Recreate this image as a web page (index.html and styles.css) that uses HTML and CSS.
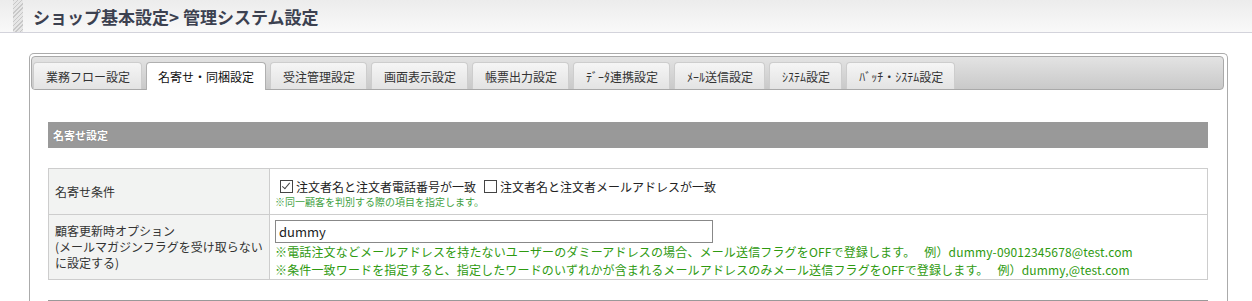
FILE: index.html
```html
<!DOCTYPE html>
<html lang="ja">
<head>
  <meta charset="UTF-8">
  <title>ショップ基本設定&gt;管理システム設定</title>
  <link rel="stylesheet" href="styles.css">
</head>
<body>

  <div class="page-title">
    <span class="hatch"></span>
    <h1>ショップ基本設定&gt; 管理システム設定</h1>
  </div>

  <div class="panel">
    <ul class="tabs">
      <li class="tab">業務フロー設定</li>
      <li class="tab active">名寄せ・同梱設定</li>
      <li class="tab">受注管理設定</li>
      <li class="tab">画面表示設定</li>
      <li class="tab">帳票出力設定</li>
      <li class="tab">ﾃﾞｰﾀ連携設定</li>
      <li class="tab">ﾒｰﾙ送信設定</li>
      <li class="tab">ｼｽﾃﾑ設定</li>
      <li class="tab">ﾊﾞｯﾁ・ｼｽﾃﾑ設定</li>
    </ul>

    <div class="content">
      <h2 class="section-head">名寄せ設定</h2>

      <table class="form-table">
        <tr class="row-match">
          <th>名寄せ条件</th>
          <td>
            <div class="checks">
              <label class="check"><span class="box checked"></span>注文者名と注文者電話番号が一致</label>
              <label class="check"><span class="box"></span>注文者名と注文者メールアドレスが一致</label>
            </div>
            <p class="note small">※同一顧客を判別する際の項目を指定します。</p>
          </td>
        </tr>
        <tr class="row-option">
          <th>顧客更新時オプション<br>(メールマガジンフラグを受け取らない<br>に設定する)</th>
          <td>
            <input type="text" class="text-input" value="dummy">
            <p class="note">※電話注文などメールアドレスを持たないユーザーのダミーアドレスの場合、メール送信フラグをOFFで登録します。　 例）dummy-09012345678@test.com</p>
            <p class="note">※条件一致ワードを指定すると、指定したワードのいずれかが含まれるメールアドレスのみメール送信フラグをOFFで登録します。　 例）dummy,@test.com</p>
          </td>
        </tr>
      </table>

      <div class="divider"></div>
    </div>
  </div>

</body>
</html>
```

FILE: styles.css
```css
body {
  margin: 0;
  padding: 0;
  background: #fff;
  font-family: "Noto Sans CJK JP", "Noto Sans", sans-serif;
  color: #333;
}
.page-title {
  height: 32px;
  display: flex;
  align-items: center;
  background: linear-gradient(#ececec, #f9f9f9);
  border-bottom: 1px solid #d3d3db;
}
.hatch {
  align-self: stretch;
  width: 10px;
  margin-left: 13px;
  background: repeating-linear-gradient(135deg, #c8c8c8 0 1px, #e6e6e6 1px 3px);
}
.page-title h1 {
  margin: 0 0 0 10px;
  font-size: 17px;
  font-weight: bold;
  color: #3c4150;
}
.panel {
  margin: 20px 24px 0 29px;
  border: 1px solid #ababab;
  border-bottom: none;
  border-radius: 5px 5px 0 0;
  height: 260px;
}
.tabs {
  list-style: none;
  margin: 2px 3px 0 1px;
  padding: 5px 0 0 1px;
  height: 27px;
  display: flex;
  gap: 4px;
  background: linear-gradient(#e3e3e3, #c9c9c9);
  border: 1px solid #a9a9a9;
  border-radius: 4px;
}
.tab {
  height: 26px;
  padding: 0 11px 0 12px;
  display: flex;
  align-items: center;
  font-size: 12px;
  color: #333;
  background: linear-gradient(#f5f5f5, #e3e3e3);
  border: 1px solid #cdcdcd;
  border-bottom: none;
  border-radius: 4px 4px 0 0;
}
.tab.active {
  height: 27px;
  margin-bottom: -1px;
  padding: 0 11px 0 11px;
  font-size: 12px;
  color: #111;
  background: #fff;
  border-color: #b0b0b0;
}
.content {
  padding: 32px 19px 0 18px;
}
.section-head {
  margin: 0 0 20px;
  height: 26px;
  line-height: 26px;
  padding-left: 5px;
  background: #999;
  color: #fff;
  font-size: 11px;
  font-weight: bold;
  text-shadow: 0 0 1px #666;
}
.form-table {
  width: 100%;
  border-collapse: collapse;
  border: 1px solid #cdcdcd;
}
.form-table th,
.form-table td {
  border: 1px solid #cdcdcd;
  font-size: 12px;
  font-weight: normal;
  text-align: left;
}
.form-table th {
  width: 208px;
  padding: 0 6px;
  background: #f2f3f2;
  color: #333;
  line-height: 16px;
}
.form-table td {
  padding: 0 5px;
  vertical-align: top;
}
.row-match {
  height: 46px;
}
.row-match td {
  padding-top: 8px;
}
.row-option {
  height: 65px;
}
.row-option td {
  padding-top: 5px;
}
.checks {
  display: flex;
  gap: 8px;
  padding-left: 5px;
  height: 18px;
  align-items: center;
}
.check {
  display: flex;
  align-items: center;
  gap: 3px;
  font-size: 12px;
  color: #222;
}
.box {
  width: 11px;
  height: 11px;
  border: 1px solid #444;
  position: relative;
}
.box.checked::after {
  content: "";
  position: absolute;
  left: 3px;
  top: 0;
  width: 3px;
  height: 7px;
  border: solid #444;
  border-width: 0 1.5px 1.5px 0;
  transform: rotate(40deg);
}
.note {
  margin: 0;
  font-size: 12px;
  line-height: 18px;
  letter-spacing: 0.15px;
  color: #2e9a10;
}
.note.small {
  font-size: 10px;
  line-height: 13px;
  letter-spacing: 0;
  color: #3f9f3f;
}
.text-input {
  display: block;
  box-sizing: border-box;
  width: 438px;
  height: 23px;
  margin: 0;
  padding: 0 3px;
  border: 1px solid #888;
  font-family: inherit;
  font-size: 13px;
  color: #222;
}
.divider {
  margin-top: 20px;
  border-top: 1px solid #999;
}
```
